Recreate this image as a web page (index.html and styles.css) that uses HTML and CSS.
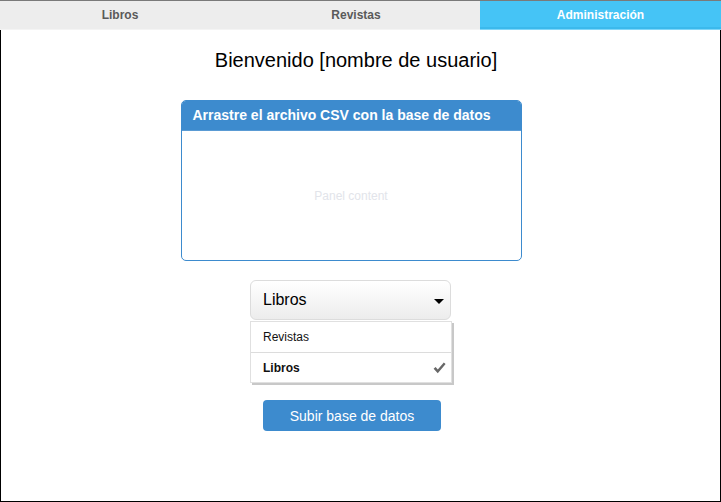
FILE: index.html
```html
<!DOCTYPE html>
<html lang="es">
<head>
<meta charset="utf-8">
<title>Administración</title>
<link rel="stylesheet" href="styles.css">
</head>
<body>
<div class="app">
  <nav class="tabs">
    <div class="tab">Libros</div>
    <div class="tab"><span class="tab-shift">Revistas</span></div>
    <div class="tab active">Administración</div>
  </nav>
  <main class="content">
    <h1 class="welcome">Bienvenido [nombre de usuario]</h1>
    <section class="panel">
      <header class="panel-head">Arrastre el archivo CSV con la base de datos</header>
      <div class="panel-body">Panel content</div>
    </section>
    <div class="select-wrap">
      <div class="select">
        <span>Libros</span>
        <span class="caret"></span>
      </div>
      <ul class="menu">
        <li class="item">Revistas</li>
        <li class="item selected">Libros
          <svg class="check" width="13" height="12" viewBox="0 0 13 12"><path d="M0.6 6.8 L2.6 4.9 L4.8 7.4 L10.8 0.5 L12.6 2 L4.8 11.2 Z" fill="#676767"/></svg>
        </li>
      </ul>
    </div>
    <button class="upload">Subir base de datos</button>
  </main>
</div>
</body>
</html>
```
FILE: styles.css
```css
* { box-sizing: border-box; }
html, body { margin: 0; padding: 0; }
body {
  font-family: "Liberation Sans", Arial, sans-serif;
  background: #fff;
  color: #000;
}
.app {
  width: 721px;
  height: 502px;
  display: flex;
  flex-direction: column;
}
.tabs {
  display: flex;
  height: 30px;
  border-top: 1px solid #7a7a7a;
  background: #ededed;
}
.tab {
  width: 240px;
  display: flex;
  align-items: center;
  justify-content: center;
  font-size: 12px;
  font-weight: bold;
  color: #5a5a5a;
  border-bottom: 1px solid #f4f4f4;
  padding-bottom: 1px;
}
.tab-shift { margin-right: 8px; }
.tab.active {
  flex: 1;
  background: #45c4f6;
  color: #fff;
  box-shadow: inset 0 -2px 0 #3bb9ec;
  border-bottom-color: #7fd6f8;
}
.content {
  flex: 1;
  border: 1px solid #000;
  border-top: none;
  display: flex;
  flex-direction: column;
  align-items: center;
  padding: 18px 19px 0 0;
}
.welcome {
  margin: 0 0 0 10px;
  font-size: 20px;
  font-weight: normal;
  line-height: 24px;
}
.panel {
  margin-top: 28px;
  width: 341px;
  height: 161px;
  border: 1px solid #3d8bce;
  border-radius: 5px;
  overflow: hidden;
  display: flex;
  flex-direction: column;
}
.panel-head {
  height: 30px;
  background: #3d8bce;
  color: #fff;
  font-weight: bold;
  font-size: 14px;
  padding: 6px 11px 0;
  border-bottom: 1px solid #5a9bd4;
}
.panel-body {
  flex: 1;
  display: flex;
  align-items: center;
  justify-content: center;
  font-size: 12px;
  color: #e2e4ea;
}
.select-wrap {
  margin-top: 19px;
  width: 202px;
}
.select {
  width: 201px;
  height: 40px;
  border: 1px solid #dcdcdc;
  border-radius: 6px;
  background: linear-gradient(#ffffff, #ececec);
  display: flex;
  align-items: center;
  justify-content: space-between;
  padding: 0 6px 0 12px;
  font-size: 16px;
}
.caret {
  width: 0;
  height: 0;
  border-left: 5px solid transparent;
  border-right: 5px solid transparent;
  border-top: 5px solid #000;
  margin-top: 2px;
}
.menu {
  list-style: none;
  margin: 1px 0 0;
  padding: 0;
  width: 202px;
  border: 1px solid #e0e0e0;
  box-shadow: 2px 2px 0 #c8c8c8;
  background: #fff;
}
.item {
  height: 30px;
  display: flex;
  align-items: center;
  justify-content: space-between;
  padding: 0 5px 0 12px;
  font-size: 12px;
  color: #111;
}
.item + .item { border-top: 1px solid #dcdcdc; }
.item.selected { font-weight: bold; }
.upload {
  margin-top: 17px;
  width: 178px;
  height: 31px;
  border: none;
  border-radius: 4px;
  background: #3d8bce;
  color: #fff;
  font-family: "Liberation Sans", Arial, sans-serif;
  font-size: 14px;
  padding: 0;
  margin-left: 2px;
}
```
